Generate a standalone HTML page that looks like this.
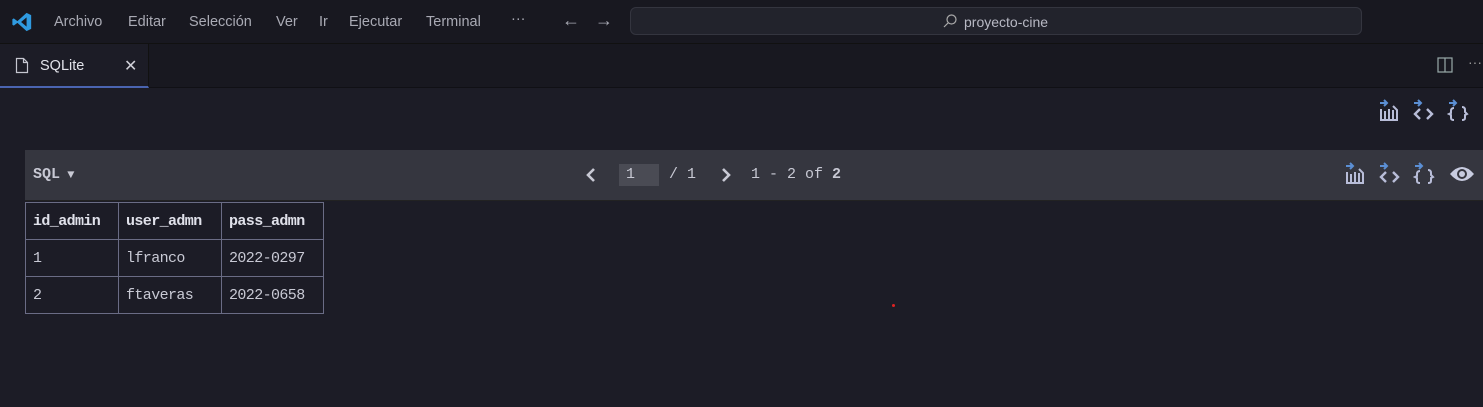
<!DOCTYPE html>
<html><head><style>
*{margin:0;padding:0;box-sizing:border-box}
body{width:1483px;height:407px;background:#1c1c26;font-family:"Liberation Sans",sans-serif;overflow:hidden;position:relative;color:#ccc}
.title{position:absolute;left:0;top:0;width:1483px;height:44px;background:#181820;border-bottom:1px solid #111}
.menu{position:absolute;top:14px;font-size:14.5px;color:#a9aab4}
.search{position:absolute;left:630px;top:7px;width:732px;height:28px;border:1px solid #34353f;border-radius:6px;background:#22232c}
.tabs{position:absolute;top:44px;left:0;width:1483px;height:44px;background:#181820;border-bottom:1px solid #101015}
.tab{position:absolute;left:0;top:0;width:149px;height:44px;background:#1c1c26;border-bottom:2px solid #4a64b0;border-right:1px solid #111}
.bar{position:absolute;left:25px;top:150px;width:1458px;height:51px;background:#35363f;border-bottom:1px solid #222}
.mono{font-family:"Liberation Mono",monospace;font-size:15px;color:#c8c9d4}
table{position:absolute;left:25px;top:202px;border-collapse:collapse}
td{border:1px solid #6a6c85;height:37px;padding:0 7px;font-family:"Liberation Mono",monospace;font-size:15px;color:#c8c9d4;letter-spacing:-0.6px}
th{border:1px solid #6a6c85;height:37px;padding:0 7px;font-family:"Liberation Mono",monospace;font-size:15px;color:#e0e1ea;text-align:left;letter-spacing:-0.6px}
.ic{position:absolute}
</style></head><body>
<svg width="0" height="0" style="position:absolute">
<defs>
<g id="arr"><path d="M2 4 H9 M6 1 L9 4 L6 7" stroke="#5b8fd4" stroke-width="2" fill="none"/></g>
<g id="i1"><use href="#arr"/><path d="M3 10 V21 H19 V11 L15 7 M7 21 V12 M11 21 V10 M15 21 V11" stroke="#b8bdd8" stroke-width="2" fill="none"/></g>
<g id="i2"><use href="#arr"/><path d="M8 10 L3 15 L8 20 M15 10 L20 15 L15 20" stroke="#b8bdd8" stroke-width="2.4" fill="none"/></g>
<g id="i3"><use href="#arr"/><path d="M7 9 Q4 9 4 12 V14 L2 15 L4 16 V19 Q4 21 7 21 M15 8 Q18 8 18 11 V13 L20 15 L18 16 V19 Q18 21 15 21" stroke="#b8bdd8" stroke-width="2" fill="none"/></g>
</defs></svg>
<div class="title">
<svg style="position:absolute;left:11px;top:11px" width="22" height="22" viewBox="0 0 24 24"><path d="M17 2 L22 4.5 V19.5 L17 22 L7 13 L3 16 L1.5 15 V9 L3 8 L7 11 Z M17 7 L11 12 L17 17 Z" fill="#2f9ae0"/></svg>
<span class="menu" style="left:54px">Archivo</span>
<span class="menu" style="left:128px">Editar</span>
<span class="menu" style="left:189px">Selección</span>
<span class="menu" style="left:276px">Ver</span>
<span class="menu" style="left:319px">Ir</span>
<span class="menu" style="left:349px">Ejecutar</span>
<span class="menu" style="left:426px">Terminal</span>
<span class="menu" style="left:511px;top:11px">···</span>
<span class="menu" style="left:562px;top:10px;font-size:18px">←</span>
<span class="menu" style="left:595px;top:10px;font-size:18px">→</span>
<div class="search"><svg style="position:absolute;left:311px;top:5px" width="16" height="16" viewBox="0 0 16 16"><circle cx="9.5" cy="6.5" r="4.5" stroke="#aaa" fill="none" stroke-width="1.2"/><path d="M6 10 L2 14" stroke="#aaa" stroke-width="1.2"/></svg><span style="position:absolute;left:333px;top:6px;font-size:14px;color:#b8b9c4">proyecto-cine</span></div>
</div>
<div class="tabs">
<div class="tab">
<svg style="position:absolute;left:15px;top:13px" width="14" height="17" viewBox="0 0 14 17"><path d="M1.5 1.5 H8.5 L12.5 5.5 V15.5 H1.5 Z M8.5 1.5 V5.5 H12.5" fill="none" stroke="#c5c6d0" stroke-width="1.2"/></svg>
<span style="position:absolute;left:40px;top:14px;font-size:14.5px;color:#e2e3ea">SQLite</span>
<span style="position:absolute;left:124px;top:12px;font-size:16px;color:#d0d0d8">✕</span>
</div>
<svg style="position:absolute;left:1437px;top:13px" width="16" height="16"><rect x="1" y="1" width="14" height="14" fill="none" stroke="#9aa" stroke-width="1.2"/><path d="M8 1V15" stroke="#9aa" stroke-width="1.2"/></svg>
<span style="position:absolute;left:1468px;top:10px;color:#999;font-size:14px">···</span>
</div>
<svg class="ic" style="left:1378px;top:99px" width="24" height="24"><use href="#i1"/></svg>
<svg class="ic" style="left:1412px;top:99px" width="24" height="24"><use href="#i2"/></svg>
<svg class="ic" style="left:1447px;top:99px" width="24" height="24"><use href="#i3"/></svg>
<div class="bar">
<span class="mono" style="position:absolute;left:8px;top:16px;font-weight:bold">SQL<span style="font-size:12px"> ▼</span></span>
<svg style="position:absolute;left:560px;top:17px" width="12" height="16"><path d="M9 2 L3 8 L9 14" stroke="#c8c9d4" stroke-width="2.6" fill="none"/></svg>
<div style="position:absolute;left:594px;top:14px;width:40px;height:22px;background:#4a4b54"></div>
<span class="mono" style="position:absolute;left:601px;top:16px">1</span>
<span class="mono" style="position:absolute;left:644px;top:16px">/ 1</span>
<svg style="position:absolute;left:695px;top:17px" width="12" height="16"><path d="M3 2 L9 8 L3 14" stroke="#c8c9d4" stroke-width="2.6" fill="none"/></svg>
<span class="mono" style="position:absolute;left:726px;top:16px">1 - 2 of <b>2</b></span>
<svg class="ic" style="left:1319px;top:12px" width="24" height="24"><use href="#i1"/></svg>
<svg class="ic" style="left:1353px;top:12px" width="24" height="24"><use href="#i2"/></svg>
<svg class="ic" style="left:1388px;top:12px" width="24" height="24"><use href="#i3"/></svg>
<svg style="position:absolute;left:1424px;top:14px" width="26" height="20" viewBox="0 0 26 20"><path d="M1 10 Q13 -4 25 10 Q13 24 1 10 Z" fill="#c8cce0"/><circle cx="13" cy="10" r="5" fill="#35363f"/><circle cx="13" cy="10" r="3" fill="#c8cce0"/></svg>
</div>
<table>
<tr><th style="width:93px">id_admin</th><th style="width:103px">user_admn</th><th style="width:102px">pass_admn</th></tr>
<tr><td>1</td><td>lfranco</td><td>2022-0297</td></tr>
<tr><td>2</td><td>ftaveras</td><td>2022-0658</td></tr>
</table>
<div style="position:absolute;left:892px;top:304px;width:3px;height:3px;background:#d22;border-radius:50%"></div>
</body></html>
